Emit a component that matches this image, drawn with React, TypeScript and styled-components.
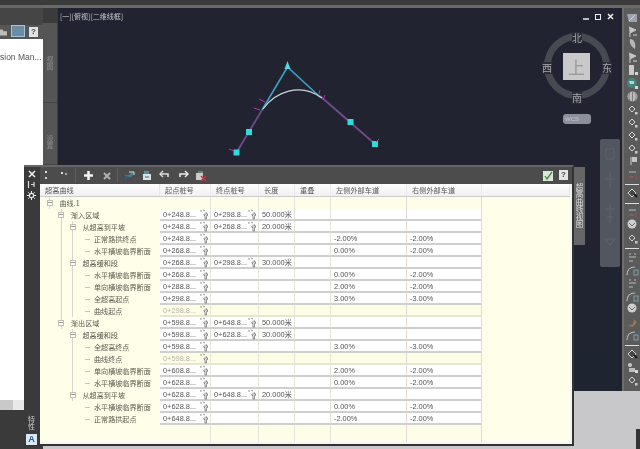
import React from 'react';
import styled, { createGlobalStyle } from 'styled-components';

const Global = createGlobalStyle`
  html, body { margin: 0; padding: 0; background: #c8c8ca; overflow: hidden; }
  * { box-sizing: border-box; }
`;

const UI = '"Noto Sans CJK SC", "Liberation Sans", sans-serif';
const NUM = '"Liberation Sans", "Noto Sans CJK SC", sans-serif';

const Shell = styled.div`
  position: relative; width: 640px; height: 449px; display: flex; overflow: hidden;
  font-family: ${UI}; filter: blur(0.45px); background: #c8c8ca;
`;
const LeftColumn = styled.aside`
  width: 43px; display: flex; flex-direction: column; background: #3a3a3a; flex: none;
`;
const PanelTop = styled.div`
  height: 39px; background: linear-gradient(#3b3b3b 0 5px, #676767 5px 8px, #454545 8px 25px, #565656 25px);
  display: flex; justify-content: flex-end; align-items: flex-end; gap: 4px; padding: 0 5px 2px 0;
`;
const PanelButton = styled.div<{ $active?: boolean }>`
  width: ${p => (p.$active ? '14px' : '9px')}; height: ${p => (p.$active ? '12px' : '10px')};
  background: ${p => (p.$active ? '#6d8ca3' : '#e4e4e4')};
  border: ${p => (p.$active ? '1px solid #9cc4de' : 'none')};
  color: #444; font: 700 8px/10px ${NUM}; text-align: center; flex: none;
`;
const PanelBody = styled.div`
  height: 361px; background: #fff; font: 8.5px ${NUM}; color: #555; padding-top: 13px; white-space: nowrap; overflow: hidden;
`;
const PanelScroll = styled.div`
  height: 10px; background: linear-gradient(90deg, #c9c9c9 0 13px, #e8e8e8 13px);
`;
const RightColumn = styled.div`
  flex: 1; display: flex; flex-direction: column; min-width: 0;
`;
const TopStrip = styled.div`
  height: 8px; background: linear-gradient(#3b3b3b 0 5px, #696969 5px);
`;
const MainRow = styled.div`
  height: 383px; display: flex; background: #4d4d4d;
`;
const SideTabs = styled.div`
  width: 15px; display: flex; flex-direction: column; background: #3b3b3b; padding: 15px 1px 0 0; flex: none;
`;
const SideTab = styled.div<{ $h: number; $pad?: number }>`
  height: ${p => p.$h}px; background: #555; border-bottom: 1px solid #444;
  display: flex; align-items: center; justify-content: center; padding-top: ${p => p.$pad ?? 0}px;
  writing-mode: vertical-rl; font-size: 7px; color: #8c8c8c;
`;
const Canvas = styled.main`
  position: relative; width: 564px; background: linear-gradient(#212430 60%, #1e2430); flex: none; color: #ccc;
`;
const ViewLabel = styled.div`
  padding: 4px 0 0 2px; font-size: 7px; line-height: 9px; color: #c8c8c8; white-space: nowrap;
`;
const Drawing = styled.svg`
  position: absolute; left: 0; top: 0;
`;
const WindowControls = styled.div`
  position: absolute; top: 4px; right: 5px; display: flex; gap: 2px;
`;
const CompassBox = styled.div`
  position: absolute; left: 481px; top: 24px; width: 76px; height: 106px; color: #aeb0b4;
`;
const Ring = styled.div`
  position: absolute; left: 5px; top: 1px; width: 66px; height: 66px; border-radius: 50%; border: 7px solid #484a52;
`;
const Cube = styled.div`
  position: absolute; left: 24px; top: 21px; width: 27px; height: 27px; background: #c9c9c9; color: #999;
  display: flex; align-items: center; justify-content: center; font-size: 17px;
`;
const Dir = styled.span<{ $x: number; $y: number }>`
  position: absolute; left: ${p => p.$x}px; top: ${p => p.$y}px; font-size: 10px; line-height: 12px; color: #a8a8ac; background: #2a2c36;
`;
const Wcs = styled.div`
  position: absolute; left: 24px; top: 82px; width: 28px; height: 10px; border-radius: 3px; background: #8d8f9a;
  font: 6px/10px ${NUM}; color: #c8c8d0; padding-left: 2px;
`;
const ViewTab = styled.div`
  position: absolute; left: 542px; top: 131px; width: 20px; height: 128px; background: #51565f; border-radius: 2px;
`;
const RightBar = styled.nav`
  width: 18px; border-left: 2px solid #6e6e6e; background: #5b5b5b; padding-top: 4px; display: flex; flex-direction: column; flex: none;
`;
const ToolSlot = styled.div`
  height: 13px; display: flex; align-items: center; justify-content: center; opacity: 0.85;
`;
const ToolSep = styled.div`
  height: 6px; display: flex; align-items: center; padding: 0 1px;
  &::after { content: ''; width: 100%; height: 1px; background: #ddd; }
`;
const Footer = styled.div`
  flex: 1; background: #c8c8ca;
`;
const Dialog = styled.section`
  position: absolute; left: 24px; top: 165px; width: 550px; height: 281px; display: flex;
  background: #444; border-top: 2px solid #666; border-right: 2px solid #333; border-bottom: 2px solid #333;
`;
const DialogStrip = styled.div`
  width: 16px; display: flex; flex-direction: column; align-items: center; background: #3a3a3a; padding: 1px 1px 0 0; flex: none;
`;
const StripIcon = styled.div`
  height: 11px; display: flex; align-items: center; justify-content: center;
`;
const StripText = styled.div`
  margin-top: auto; writing-mode: vertical-rl; font-size: 7px; line-height: 8px; color: #ccc; margin-bottom: 4px;
`;
const ABox = styled.div`
  width: 11px; height: 11px; background: #d8e8f5; color: #1d5fa8; font: 700 9px/11px ${NUM}; text-align: center; margin-bottom: -1px;
`;
const DialogMain = styled.div`
  flex: 1; display: flex; flex-direction: column; min-width: 0;
`;
const Toolbar = styled.div`
  height: 17px; display: flex; align-items: center; background: #4c4c4c; flex: none;
`;
const ToolButton = styled.div<{ $w?: number }>`
  width: ${p => p.$w ?? 19}px; height: 15px; display: flex; align-items: center; justify-content: center; flex: none;
`;
const ToolDivider = styled.div`
  width: 1px; height: 15px; background: #5f5f5f; flex: none; margin: 0 1px;
`;
const ToolEnd = styled.div`
  margin-left: auto; display: flex; gap: 6px; padding-right: 4px;
`;
const Table = styled.div`
  flex: 1; background: #fefee9; border-width: 0 2px 2px 0; border-style: solid; border-color: #f4f4f4;
  display: flex; flex-direction: column;
`;
const COLS = '120px 51px 48px 36px 36px 76px 75px 1fr';
const HeadRow = styled.div`
  height: 13px; display: grid; grid-template-columns: ${COLS}; background: linear-gradient(#fff, #f0f0f0); border-bottom: 1px solid #ccc;
`;
const HeadCell = styled.div`
  padding-left: 5px; font-size: 7.2px; line-height: 12px; color: #555; white-space: nowrap; border-right: 1px solid #e8e8e8;
`;
const DataRow = styled.div<{ $h?: number }>`
  height: ${p => p.$h ?? 12}px; display: grid; grid-template-columns: ${COLS}; flex: none;
`;
const TreeCell = styled.div`
  display: flex; align-items: center; padding-left: 4px; font-size: 7.1px; color: #5a5a4e; white-space: nowrap; height: 12px;
`;
const Slot = styled.span<{ $w: number; $kind: string }>`
  width: ${p => p.$w}px; height: 12px; flex: none; display: flex; align-items: center; justify-content: center;
  background: ${p =>
    p.$kind === 'line' || p.$kind === 'box'
      ? 'linear-gradient(#d6d6cb,#d6d6cb) center/1px 100% no-repeat'
      : p.$kind === 'tick'
      ? 'linear-gradient(#c6c6bb,#c6c6bb) right center/5px 1px no-repeat'
      : 'none'};
`;
const Expander = styled.span`
  width: 6px; height: 6px; border: 1px solid #c0c0b5; background: linear-gradient(#fff 0 1px, #999 1px 2px, #fff 2px);
`;
const Label = styled.span`
  margin-left: 4px;
`;
const ValueCell = styled.div<{ $muted?: boolean; $edge?: boolean; $plain?: boolean }>`
  display: flex; align-items: center; justify-content: space-between; padding: 0 0 0 3px; height: 12px;
  font: 7.4px/11px ${NUM}; color: ${p => (p.$muted ? '#b5b5a8' : '#555')}; white-space: nowrap;
  background: ${p => (p.$plain ? '#fdfde6' : '#fff')};
  border-bottom: 2px solid ${p => (p.$plain ? '#e6e6d8' : '#cfcfcf')};
  border-right: ${p => (p.$edge ? '1px solid #e4d8d4' : '1px solid #e4e4da')};
`;
const EmptyCell = styled.div<{ $edge?: boolean }>`
  background: #fdfde8; border-right: ${p => (p.$edge ? '1px solid #e4d8d4' : '1px solid #e4e4da')};
`;
const Blank = styled.div`
  background: #fefee9;
`;
const FloatTab = styled.div`
  position: absolute; left: 574px; top: 167px; width: 11px; height: 78px; background: #666;
  writing-mode: vertical-rl; font-size: 7.5px; line-height: 11px; color: #ddd; padding-top: 16px; white-space: nowrap; overflow: hidden;
`;
const DarkCorner = styled.div`
  position: absolute; right: 0; bottom: 0; width: 4px; height: 20px; background: #333;
`;

const Picker = () => (
  <svg width="10" height="11" viewBox="0 0 10 11" fill="none">
    <path d="M0 2h2M3 1l2 1M6 3l1 2" stroke="#888" strokeWidth=".9" />
    <path d="M4 5h3.500v1.500h-1v3.500h-1.500v-3.500H4z" fill="#fff" stroke="#666" strokeWidth=".7" />
  </svg>
);

type RowData = {
  s: string[]; t: string; a?: string; b?: string; len?: string; l?: string; r?: string; muted?: boolean; plain?: boolean;
};
const W = [11.5, 11.5, 11.5, 11.5];
const rows: RowData[] = [
  { s: ['box'], t: '曲线.1', plain: true },
  { s: ['', 'box'], t: '渐入区域', a: '0+248.8...', b: '0+298.8...', len: '50.000米' },
  { s: ['', 'line', 'box'], t: '从超高到平坡', a: '0+248.8...', b: '0+268.8...', len: '20.000米' },
  { s: ['', 'line', 'line', 'tick'], t: '正常路拱终点', a: '0+248.8...', l: '-2.00%', r: '-2.00%' },
  { s: ['', 'line', 'line', 'tick'], t: '水平横坡临界断面', a: '0+268.8...', l: '0.00%', r: '-2.00%' },
  { s: ['', 'line', 'box'], t: '超高缓和段', a: '0+268.8...', b: '0+298.8...', len: '30.000米' },
  { s: ['', 'line', 'line', 'tick'], t: '水平横坡临界断面', a: '0+268.8...', l: '0.00%', r: '-2.00%' },
  { s: ['', 'line', 'line', 'tick'], t: '单向横坡临界断面', a: '0+288.8...', l: '2.00%', r: '-2.00%' },
  { s: ['', 'line', 'line', 'tick'], t: '全超高起点', a: '0+298.8...', l: '3.00%', r: '-3.00%' },
  { s: ['', 'line', 'line', 'tick'], t: '曲线起点', a: '0+298.8...', muted: true, plain: true },
  { s: ['', 'box'], t: '渐出区域', a: '0+598.8...', b: '0+648.8...', len: '50.000米' },
  { s: ['', '', 'box'], t: '超高缓和段', a: '0+598.8...', b: '0+628.8...', len: '30.000米' },
  { s: ['', '', 'line', 'tick'], t: '全超高终点', a: '0+598.8...', l: '3.00%', r: '-3.00%' },
  { s: ['', '', 'line', 'tick'], t: '曲线终点', a: '0+598.8...', muted: true, plain: true },
  { s: ['', '', 'line', 'tick'], t: '单向横坡临界断面', a: '0+608.8...', l: '2.00%', r: '-2.00%' },
  { s: ['', '', 'line', 'tick'], t: '水平横坡临界断面', a: '0+628.8...', l: '0.00%', r: '-2.00%' },
  { s: ['', '', 'box'], t: '从超高到平坡', a: '0+628.8...', b: '0+648.8...', len: '20.000米' },
  { s: ['', '', '', 'tick'], t: '水平横坡临界断面', a: '0+628.8...', l: '0.00%', r: '-2.00%' },
  { s: ['', '', '', 'tick'], t: '正常路拱起点', a: '0+648.8...', l: '-2.00%', r: '-2.00%' },
];

const headers = ['超高曲线', '起点桩号', '终点桩号', '长度', '重叠', '左侧外部车道', '右侧外部车道', ''];

const Row = ({ row }: { row: RowData }) => {
  const editable = !!row.a;
  const v = (txt?: string, picker?: boolean, edge?: boolean) =>
    editable ? (
      <ValueCell $muted={row.muted} $plain={row.plain} $edge={edge}>
        <span>{txt ?? ''}</span>
        {picker && txt ? <Picker /> : null}
      </ValueCell>
    ) : (
      <EmptyCell $edge={edge} />
    );
  return (
    <DataRow>
      <TreeCell>
        {row.s.map((k, i) => (
          <Slot key={i} $w={W[i]} $kind={k}>
            {k === 'box' ? <Expander /> : null}
          </Slot>
        ))}
        <Label>{row.t}</Label>
      </TreeCell>
      {v(row.a, true)}
      {v(row.b, true)}
      {v(row.len)}
      {v()}
      {v(row.l, false, true)}
      {v(row.r, false, true)}
      <Blank />
    </DataRow>
  );
};

const ToolIcon = ({ k }: { k: string }) => {
  const s = { width: 13, height: 13, viewBox: '0 0 13 13', fill: 'none' } as const;
  switch (k) {
    case 'sun':
      return <svg {...s}><path d="M1 2h10v8H3z" fill="#a9afc0" /><path d="M3 9l6-6" stroke="#e8e8e8" /></svg>;
    case 'flag':
      return <svg {...s}><path d="M3 2l7 3-6 3v4" fill="#d8d8d8" stroke="#d8d8d8" /><path d="M7 10h4" stroke="#eee" /></svg>;
    case 'leaf':
      return <svg {...s}><path d="M4 1c4 0 6 4 5 10C6 9 3 6 4 1z" fill="#c8c8c8" /></svg>;
    case 'page':
      return <svg {...s}><path d="M3 1h5v10H3z" fill="#ddd" /><rect x="9" y="8" width="3" height="3" fill="#eee" /></svg>;
    case 'globe':
      return <svg {...s}><circle cx="6" cy="6" r="5" fill="#3e8f86" /><path d="M3 4h5v3H4z" fill="#cfe5e0" /><rect x="9" y="9" width="3" height="3" fill="#eee" /></svg>;
    case 'ball':
      return <svg {...s}><circle cx="6.5" cy="6.5" r="5" fill="#cfcfcf" /><path d="M6.5 1.5v10M4 2.5c-1.500 3-1.500 5 0 8M9 2.500c1.500 3 1.500 5 0 8" stroke="#666" strokeWidth=".7" /></svg>;
    case 'diamond':
      return <svg {...s}><path d="M6 3l3 3-3 3-3-3z" stroke="#eee" /><rect x="9" y="9" width="2.500" height="2.500" fill="#ddd" /></svg>;
    case 'solid':
      return <svg {...s}><path d="M6 2l4 4-4 4-4-4z" stroke="#eee" fill="#444" /><path d="M8 7l3 3" stroke="#111" strokeWidth="2" /></svg>;
    case 'red':
      return <svg {...s}><path d="M3 4h7" stroke="#ccc" /><path d="M3 9h5" stroke="#8f5a5a" strokeWidth="2" /><rect x="9" y="7" width="2" height="4" fill="#8f5050" /></svg>;
    case 'marker':
      return <svg {...s}><path d="M5 2v8" stroke="#ddd" /><rect x="6" y="2" width="5" height="5" fill="#d8d8d8" /></svg>;
    case 'sphere':
      return <svg {...s}><circle cx="6" cy="5" r="4.500" fill="#e4e4e4" /><path d="M3 4l3 3 3-3" stroke="#8a6a50" /></svg>;
    case 'orange':
      return <svg {...s}><path d="M2 10l5-2 1-5 3 3-4 5z" fill="#a9784d" /></svg>;
    case 'curve':
      return <svg {...s}><path d="M1 11c0-5 3-8 8-8" stroke="#ccc" strokeWidth="1.200" /><rect x="8" y="6" width="4" height="5" stroke="#8ab" /></svg>;
    case 'lines':
      return <svg {...s}><path d="M3 3h2M8 3h2M3 6h7M3 10h4" stroke="#ccc" /></svg>;
    default:
      return <svg {...s}><circle cx="4" cy="4" r="2" fill="#ddd" /><rect x="3" y="7" width="6" height="4" fill="#ccc" /><rect x="9" y="9" width="3" height="3" fill="#eee" /></svg>;
  }
};

const tools = [
  'sun', 'flag', 'leaf', 'flag', 'page', 'globe', 'ball', 'diamond', 'diamond', 'diamond', 'diamond', 'marker', 'red', '|',
  'solid', '|',
  'red', 'sphere', 'diamond', '|',
  'lines', 'curve', 'lines', 'curve', 'sphere', 'orange', 'curve', '|',
  'solid', 'stack', 'diamond',
];

export default function App() {
  return (
    <Shell>
      <Global />
      <LeftColumn>
        <PanelTop>
          <svg width="8" height="9" viewBox="0 0 8 9"><path d="M0 1h3l1 2h4v5H0z" fill="#bdbdbd" /></svg>
          <PanelButton $active />
          <PanelButton>?</PanelButton>
        </PanelTop>
        <PanelBody>sion Man...</PanelBody>
        <PanelScroll />
      </LeftColumn>
      <RightColumn>
        <TopStrip />
        <MainRow>
          <SideTabs>
            <SideTab $h={80}>视图</SideTab>
            <SideTab $h={62} $pad={16}>设置</SideTab>
          </SideTabs>
          <Canvas>
            <ViewLabel>[一][俯视][二维线框]</ViewLabel>
            <Drawing width="564" height="383" viewBox="58 8 564 383" fill="none">
              <path d="M236.500 152.500L262 110M350 122L320 96L375 144" stroke="#6f4a88" strokeWidth="1.800" />
              <path d="M262 110L287.500 67L320 97" stroke="#3f9ec8" strokeWidth="1.600" />
              <path d="M263 109C275 92 300 82 322 98" stroke="#c8d4d4" strokeWidth="1.200" />
              <path d="M287.500 61l3 8h-6z" fill="#4fd8d8" />
              <rect x="246" y="129" width="6" height="6" fill="#2fdcdc" />
              <rect x="233.500" y="149.500" width="6" height="6" fill="#2fdcdc" />
              <rect x="347.500" y="119" width="6" height="6" fill="#2fdcdc" />
              <rect x="372" y="141" width="6" height="6" fill="#2fdcdc" />
              <path d="M259 99l6 3M254 108l6 2M229 149l5 2M325 95l-2 5M320 90l-1 4M376 142l3-3" stroke="#c828c8" strokeWidth="1" />
            </Drawing>
            <WindowControls>
              <svg width="34" height="10" viewBox="0 0 34 10" fill="none">
                <path d="M0 7h6" stroke="#eee" strokeWidth="1.500" />
                <rect x="12.500" y="2.500" width="5" height="5" stroke="#eee" />
                <path d="M25 2l5 5M30 2l-5 5" stroke="#eee" strokeWidth="1.500" />
              </svg>
            </WindowControls>
            <CompassBox>
              <Ring />
              <Cube>上</Cube>
              <Dir $x={33} $y={0}>北</Dir>
              <Dir $x={33} $y={60}>南</Dir>
              <Dir $x={3} $y={30}>西</Dir>
              <Dir $x={63} $y={30}>东</Dir>
              <Wcs>WCS</Wcs>
            </CompassBox>
            <ViewTab>
              <svg width="20" height="128" viewBox="0 0 20 128" fill="none">
                <path d="M6 10h8v10H6zM5 40h10M10 34v14M5 70h10M7 78h6M10 64v20M5 100l5 6 5-6z" stroke="#60646c" />
              </svg>
            </ViewTab>
          </Canvas>
          <RightBar>
            {tools.map((t, i) =>
              t === '|' ? <ToolSep key={i} /> : <ToolSlot key={i}><ToolIcon k={t} /></ToolSlot>
            )}
          </RightBar>
        </MainRow>
        <Footer />
      </RightColumn>
      <DarkCorner />
      <Dialog>
        <DialogStrip>
          <StripIcon>
            <svg width="8" height="8" viewBox="0 0 8 8"><path d="M1 1l6 6M7 1l-6 6" stroke="#eee" strokeWidth="1.500" /></svg>
          </StripIcon>
          <StripIcon>
            <svg width="9" height="9" viewBox="0 0 9 9"><path d="M1.500 1v7M4 4.500h3M7 2v5" stroke="#ddd" strokeWidth="1.200" /></svg>
          </StripIcon>
          <StripIcon>
            <svg width="9" height="9" viewBox="0 0 9 9" fill="none"><circle cx="4.500" cy="4.500" r="2.200" stroke="#eee" strokeWidth="1.200" /><path d="M4.500 0v2M4.500 7v2M0 4.500h2M7 4.500h2M1.300 1.300l1.200 1.200M6.500 6.500l1.200 1.200M7.700 1.300L6.500 2.500M2.500 6.500L1.300 7.700" stroke="#eee" /></svg>
          </StripIcon>
          <StripText>特性</StripText>
          <ABox>A</ABox>
        </DialogStrip>
        <DialogMain>
          <Toolbar>
            <ToolButton $w={12}>
              <svg width="9" height="11" viewBox="0 0 9 11"><rect x="3" y="1" width="2" height="2" fill="#ddd" /><rect x="3" y="7" width="2" height="2" fill="#ccc" /></svg>
            </ToolButton>
            <ToolButton $w={22}>
              <svg width="11" height="11" viewBox="0 0 11 11"><rect x="3" y="2" width="2" height="2" fill="#ddd" /><rect x="7" y="3" width="2" height="2" fill="#aaa" /></svg>
            </ToolButton>
            <ToolButton $w={0} />
            <ToolDivider />
            <ToolButton $w={22}>
              <svg width="11" height="11" viewBox="0 0 11 11"><path d="M5.500 1v9M1 5.500h9" stroke="#f2f2f2" strokeWidth="2.600" /></svg>
            </ToolButton>
            <ToolButton $w={15}>
              <svg width="10" height="10" viewBox="0 0 10 10"><path d="M2 2l6 6M8 2l-6 6" stroke="#b0b0b0" strokeWidth="2" /></svg>
            </ToolButton>
            <ToolButton $w={2} />
            <ToolDivider />
            <ToolButton $w={19}>
              <svg width="12" height="11" viewBox="0 0 12 11"><path d="M1 5h5l3-3 2 2-3 3H4z" fill="#3f7f8f" /><path d="M6 2h5v3" stroke="#ddd" fill="none" /><path d="M2 9l3-3" stroke="#2a5f9f" strokeWidth="1.500" /></svg>
            </ToolButton>
            <ToolButton $w={17}>
              <svg width="12" height="11" viewBox="0 0 12 11"><path d="M2 4h8v6H2z" fill="#d8e2e6" /><path d="M3 1h5v3H3z" fill="#4f8f9f" /><path d="M4 7h4" stroke="#3a6a7a" /></svg>
            </ToolButton>
            <ToolButton $w={18}>
              <svg width="11" height="11" viewBox="0 0 11 11" fill="none"><path d="M1 4h8v3" stroke="#ddd" strokeWidth="1.600" /><path d="M4 1L1 4l3 3" stroke="#ddd" strokeWidth="1.400" /></svg>
            </ToolButton>
            <ToolButton $w={20}>
              <svg width="11" height="11" viewBox="0 0 11 11" fill="none"><path d="M10 4H2v3" stroke="#eee" strokeWidth="1.600" /><path d="M7 1l3 3-3 3" stroke="#eee" strokeWidth="1.400" /></svg>
            </ToolButton>
            <ToolButton $w={15}>
              <svg width="12" height="12" viewBox="0 0 12 12"><path d="M1 3h7v7H1z" fill="#c9ccc9" /><path d="M6 6l5 5M11 6l-5 5" stroke="#c8323a" strokeWidth="1.500" /><path d="M3 1h5v2H3z" fill="#6a7f7f" /></svg>
            </ToolButton>
            <ToolEnd>
              <svg width="10" height="11" viewBox="0 0 10 11"><rect width="10" height="10" y="1" fill="#dfe8d8" /><path d="M2 6l2 3 5-7" stroke="#3f8f3f" strokeWidth="1.300" fill="none" /></svg>
              <PanelButton>?</PanelButton>
            </ToolEnd>
          </Toolbar>
          <Table>
            <HeadRow>
              {headers.map((h, i) => <HeadCell key={i}>{h}</HeadCell>)}
            </HeadRow>
            {rows.map((r, i) => <Row key={i} row={r} />)}
            <DataRow $h={17}>
              <Blank />
              <EmptyCell />
              <EmptyCell />
              <EmptyCell />
              <EmptyCell />
              <EmptyCell $edge />
              <EmptyCell $edge />
              <Blank />
            </DataRow>
          </Table>
        </DialogMain>
      </Dialog>
      <FloatTab>超高曲线视图</FloatTab>
    </Shell>
  );
}
